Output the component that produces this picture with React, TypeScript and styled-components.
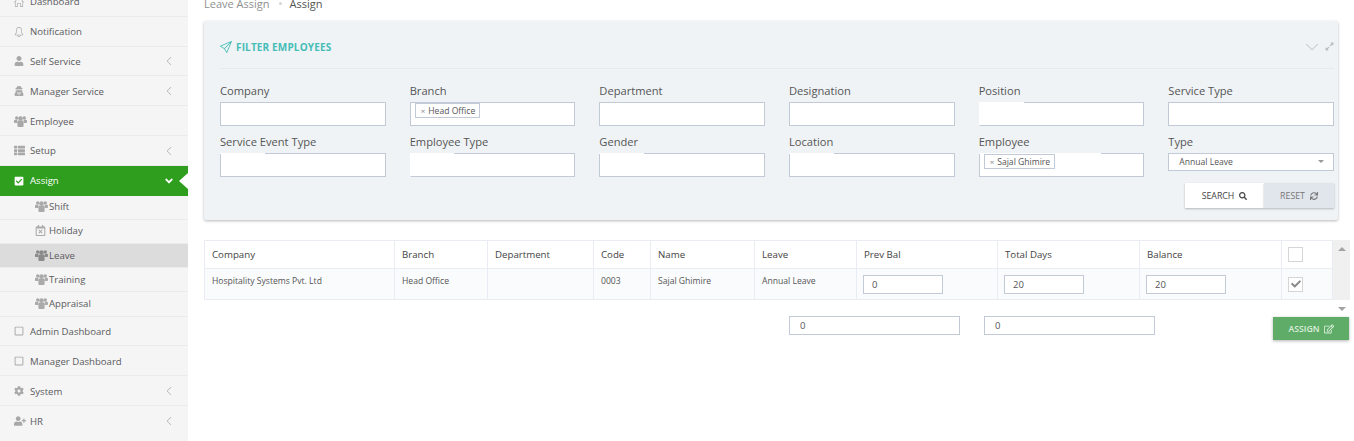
import React from 'react';
import styled, { createGlobalStyle } from 'styled-components';
import {
  FaAngleDown,
  FaCheck,
  FaCheckSquare,
  FaCog,
  FaExpandAlt,
  FaRegCalendarTimes,
  FaRegEdit,
  FaRegSquare,
  FaSearch,
  FaSync,
  FaThList,
  FaUser,
  FaUserPlus,
  FaUserSecret,
} from 'react-icons/fa';
import { SlArrowDown, SlArrowLeft, SlBell, SlHome, SlPaperPlane } from 'react-icons/sl';

const GlobalStyle = createGlobalStyle`
  html, body {
    margin: 0;
    padding: 0;
    height: 441px;
    overflow: hidden;
    background: #fff;
    font-family: "Open Sans", "Liberation Sans", sans-serif;
  }
  * { box-sizing: border-box; }
`;

const Page = styled.div`
  display: flex;
  width: 1354px;
  height: 441px;
  overflow: hidden;
`;

const Sidebar = styled.nav`
  width: 188px;
  height: 441px;
  flex: none;
  background: #f5f5f5;
  overflow: hidden;
`;

const MenuList = styled.ul`
  list-style: none;
  margin: -13px 0 0;
  padding: 0;
`;

const MenuRow = styled.li<{ $active?: boolean }>`
  position: relative;
  display: flex;
  align-items: center;
  height: 29.8px;
  padding: ${(p) => (p.$active ? '0' : '1px')} 13px 0 14px;
  font-size: 9.6px;
  color: ${(p) => (p.$active ? '#fff' : '#5b5b60')};
  background: ${(p) => (p.$active ? '#2f9e1f' : 'transparent')};
  border-bottom: ${(p) => (p.$active ? 'none' : '1px solid #ebebeb')};

  &:last-child {
    border-bottom: none;
  }
`;

const MenuIcon = styled.span<{ $active?: boolean }>`
  width: 16px;
  display: flex;
  align-items: center;
  color: ${(p) => (p.$active ? '#fff' : '#a8a8a8')};
  font-size: 10px;
`;

const MenuLabel = styled.span`
  flex: 1;
`;

const Caret = styled.span<{ $active?: boolean }>`
  display: flex;
  color: ${(p) => (p.$active ? '#fff' : '#a8a8a8')};
  font-size: ${(p) => (p.$active ? '12px' : '8px')};
  margin-right: ${(p) => (p.$active ? '0' : '2px')};
`;

const ActiveNotch = styled.span`
  position: absolute;
  right: 0;
  top: 7px;
  width: 0;
  height: 0;
  border-top: 8px solid transparent;
  border-bottom: 8px solid transparent;
  border-right: 9px solid #fff;
`;

const SubRow = styled.li<{ $selected?: boolean }>`
  display: flex;
  align-items: center;
  height: 24.2px;
  padding: 0 0 1px 35px;
  font-size: 9.6px;
  color: #5b5b60;
  background: ${(p) => (p.$selected ? '#dcdcdc' : 'transparent')};
  border-bottom: 1px solid #ebebeb;
`;

const SubIcon = styled.span<{ $selected?: boolean }>`
  display: flex;
  width: 14px;
  color: ${(p) => (p.$selected ? '#8a8a8a' : '#aaa')};
`;

const Main = styled.main`
  flex: 1;
  min-width: 0;
  padding: 0 5px 0 16px;
`;

const Breadcrumb = styled.div`
  display: flex;
  align-items: center;
  height: 21px;
  margin-top: -7px;
  font-size: 11px;
  color: #8f8f8f;
`;

const CrumbDot = styled.span`
  width: 3px;
  height: 3px;
  margin: 0 8px 0 9px;
  border-radius: 50%;
  background: #d5d5d5;
`;

const CrumbCurrent = styled.span`
  color: #555;
`;

const FilterPanel = styled.section`
  width: 1134px;
  height: 199px;
  margin-top: 7px;
  padding: 0 4px 0 16px;
  background: #eff3f6;
  border-radius: 2px;
  box-shadow: 0 1px 3px rgba(0, 0, 0, 0.28);
`;

const PanelHead = styled.header`
  display: flex;
  align-items: center;
  justify-content: space-between;
  height: 48px;
  padding-top: 4px;
  border-bottom: 1px solid #e8e9ea;
`;

const PanelTitle = styled.h2`
  display: flex;
  align-items: center;
  gap: 4px;
  margin: 0;
  font-size: 10px;
  font-weight: 700;
  letter-spacing: 0.15px;
  color: #45bdb6;
`;

const PanelTools = styled.div`
  display: flex;
  align-items: center;
  gap: 7px;
  color: #b9bdc2;
`;

const FilterGrid = styled.div`
  display: grid;
  grid-template-columns: repeat(6, 165.67px);
  column-gap: 24px;
  row-gap: 8px;
  margin-top: 15px;
`;

const Field = styled.div`
  display: flex;
  flex-direction: column;
  height: 43px;
`;

const FieldLabel = styled.label`
  height: 18px;
  font-size: 11.15px;
  line-height: 14px;
  color: #555;
`;

const TextBox = styled.div<{ $short?: boolean; $noLeft?: boolean }>`
  position: relative;
  display: flex;
  align-items: flex-start;
  height: ${(p) => (p.$short ? '18px' : '24px')};
  padding: ${(p) => (p.$short ? '0' : '0 0 0 4px')};
  background: #fff;
  border: 1px solid #c2cad8;
  ${(p) => p.$noLeft && 'border-left-color: #fff;'}
`;

const Scuff = styled.span<{ $width: number }>`
  position: absolute;
  left: -1px;
  top: -1px;
  width: ${(p) => p.$width}px;
  height: 1px;
  background: #fff;
`;

const Tag = styled.span`
  display: inline-flex;
  align-items: center;
  gap: 3px;
  height: 15px;
  padding: 0 4px 0 5px;
  font-size: 8.6px;
  color: #555;
  background: #fff;
  border: 1px solid #c2cad8;
`;

const TagClose = styled.span`
  color: #888;
  font-size: 8px;
`;

const SelectValue = styled.div`
  display: flex;
  align-items: center;
  justify-content: space-between;
  width: 100%;
  height: 15px;
  padding: 0 9px 0 10px;
  font-size: 8.6px;
  color: #555;
`;

const SelectArrow = styled.span`
  width: 0;
  height: 0;
  border-left: 3.5px solid transparent;
  border-right: 3.5px solid transparent;
  border-top: 3px solid #999;
`;

const ButtonRow = styled.div`
  display: flex;
  justify-content: flex-end;
  margin-top: 5px;
`;

const ActionButton = styled.button<{ $primary?: boolean }>`
  display: flex;
  align-items: center;
  justify-content: center;
  gap: 5px;
  height: 25px;
  width: ${(p) => (p.$primary ? '79px' : '70px')};
  padding: 0;
  border: none;
  font-family: inherit;
  font-size: 8.8px;
  font-weight: ${(p) => (p.$primary ? 500 : 400)};
  color: ${(p) => (p.$primary ? '#444' : '#777')};
  background: ${(p) => (p.$primary ? '#fff' : '#e1e5ec')};
  box-shadow: 0 1px 2px rgba(0, 0, 0, 0.25);
`;

const TableWrap = styled.div`
  display: flex;
  width: 1145px;
  margin-top: 20px;
`;

const GridTable = styled.table`
  width: 1128px;
  height: 60px;
  flex: none;
  table-layout: fixed;
  border-collapse: collapse;
  font-size: 8.6px;
  color: #555;
`;

const ColumnSize = styled.col<{ $width: number }>`
  width: ${(p) => p.$width}px;
`;

const HeadCell = styled.th`
  height: 28px;
  padding: 0 7px;
  font-size: 9.7px;
  font-weight: 500;
  text-align: left;
  color: #444;
  background: #fff;
  border: 1px solid #e9edf3;
`;

const BodyCell = styled.td`
  height: 31px;
  padding: 0 7px 7px;
  background: #fafbfd;
  border: 1px solid #e9edf3;
`;

const InputCell = styled(BodyCell)`
  padding: 0 6px;
`;

const NumberBox = styled.div`
  display: flex;
  align-items: center;
  width: 80px;
  height: 19px;
  padding-left: 8px;
  font-size: 9.5px;
  color: #555;
  background: #fff;
  border: 1px solid #c2cad8;
`;

const CheckCell = styled.td`
  padding: 0 0 0 6px;
  background: #fafbfd;
  border: 1px solid #e9edf3;
  text-align: left;
`;

const HeadCheckCell = styled.th`
  padding: 0 0 0 6px;
  background: #fff;
  border: 1px solid #e9edf3;
  text-align: left;
`;

const CheckBox = styled.span`
  display: inline-flex;
  align-items: center;
  justify-content: center;
  width: 15px;
  height: 15px;
  vertical-align: middle;
  font-size: 10px;
  color: #888;
  background: #fff;
  border: 1px solid #d5d5d5;
`;

const ScrollBar = styled.div`
  width: 17px;
  height: 76px;
  flex: none;
  display: flex;
  flex-direction: column;
  align-items: center;
  justify-content: space-between;
  padding: 7px 0 5px;
  background: linear-gradient(#f0f0f0 60px, #fff 60px);
`;

const ScrollArrow = styled.span<{ $down?: boolean }>`
  width: 0;
  height: 0;
  border-left: 4px solid transparent;
  border-right: 4px solid transparent;
  ${(p) => (p.$down ? 'border-top: 4px solid #a3a3a3;' : 'border-bottom: 4px solid #a3a3a3;')}
`;

const Totals = styled.div`
  display: flex;
  align-items: flex-start;
  gap: 24px;
  width: 1145px;
  padding-left: 585px;
`;

const TotalBox = styled.div`
  display: flex;
  align-items: center;
  width: 171px;
  height: 19px;
  padding-left: 10px;
  font-size: 9.5px;
  color: #555;
  background: #fff;
  border: 1px solid #c2cad8;
`;

const AssignButton = styled.button`
  display: flex;
  align-items: center;
  justify-content: center;
  gap: 4px;
  width: 76px;
  height: 23px;
  margin: 1px 0 0 auto;
  padding: 0;
  border: none;
  font-family: inherit;
  font-size: 8.7px;
  font-weight: 600;
  color: #dcefde;
  background: #5fac68;
  box-shadow: 0 1px 3px rgba(0, 0, 0, 0.3);
`;

// the old three-person group glyph, chunkier than the one in the icon packs
const GroupIcon = () => (
  <svg width="13" height="11" viewBox="0 0 13 11" fill="currentColor" aria-hidden="true">
    <circle cx="2.7" cy="2" r="1.7" />
    <circle cx="10.3" cy="2" r="1.7" />
    <path d="M0 4.4C0 4 .4 3.8 1 3.8h2.3L3.4 7H1C.4 7 0 6.6 0 6ZM13 4.4c0-.4-.4-.6-1-.6H9.7L9.6 7H12c.6 0 1-.4 1-1Z" />
    <circle cx="6.5" cy="2.6" r="2.3" />
    <path d="M3.4 6.2C3.4 5.2 4 4.6 5 4.6h3c1 0 1.6.6 1.6 1.6v3.2c0 1-.6 1.6-1.6 1.6H5c-1 0-1.6-.6-1.6-1.6Z" />
  </svg>
);

const menuTop = [
  { label: 'Dashboard', icon: <SlHome /> },
  { label: 'Notification', icon: <SlBell /> },
  { label: 'Self Service', icon: <FaUser />, caret: true },
  { label: 'Manager Service', icon: <FaUserSecret />, caret: true },
  { label: 'Employee', icon: <GroupIcon /> },
  { label: 'Setup', icon: <FaThList size={11} />, caret: true },
];

const menuBottom = [
  { label: 'Admin Dashboard', icon: <FaRegSquare /> },
  { label: 'Manager Dashboard', icon: <FaRegSquare /> },
  { label: 'System', icon: <FaCog />, caret: true },
  { label: 'HR', icon: <FaUserPlus size={12} />, caret: true },
];

const subMenu = [
  { label: 'Shift', icon: <GroupIcon /> },
  { label: 'Holiday', icon: <FaRegCalendarTimes size={11} /> },
  { label: 'Leave', icon: <GroupIcon />, selected: true },
  { label: 'Training', icon: <GroupIcon /> },
  { label: 'Appraisal', icon: <GroupIcon /> },
];

const filterRowOne = [
  { label: 'Company', scuff: 0 },
  { label: 'Branch', scuff: 0, tag: 'Head Office' },
  { label: 'Department', scuff: 0 },
  { label: 'Designation', scuff: 0 },
  { label: 'Position', scuff: 45, noLeft: true },
  { label: 'Service Type', scuff: 0 },
];

const filterRowTwo = [
  { label: 'Service Event Type', scuff: 45 },
  { label: 'Employee Type', scuff: 44, noLeft: true },
  { label: 'Gender', scuff: 45 },
  { label: 'Location', scuff: 45 },
  { label: 'Employee', scuff: 122, tag: 'Sajal Ghimire' },
];

const columns = [190, 93, 106, 57, 104, 102, 141, 142, 142, 51];

const renderField = (f: { label: string; scuff: number; tag?: string; noLeft?: boolean }) => (
  <Field key={f.label}>
    <FieldLabel>{f.label}</FieldLabel>
    <TextBox $noLeft={f.noLeft}>
      {f.tag && (
        <Tag>
          <TagClose>×</TagClose>
          {f.tag}
        </Tag>
      )}
      {f.scuff > 0 && <Scuff $width={f.scuff} />}
    </TextBox>
  </Field>
);

const App = () => (
  <Page>
    <GlobalStyle />
    <Sidebar>
      <MenuList>
        {menuTop.map((m) => (
          <MenuRow key={m.label}>
            <MenuIcon>{m.icon}</MenuIcon>
            <MenuLabel>{m.label}</MenuLabel>
            {m.caret && <Caret><SlArrowLeft /></Caret>}
          </MenuRow>
        ))}
        <MenuRow $active>
          <MenuIcon $active><FaCheckSquare /></MenuIcon>
          <MenuLabel>Assign</MenuLabel>
          <Caret $active><FaAngleDown /></Caret>
          <ActiveNotch />
        </MenuRow>
        {subMenu.map((s) => (
          <SubRow key={s.label} $selected={s.selected}>
            <SubIcon $selected={s.selected}>{s.icon}</SubIcon>
            {s.label}
          </SubRow>
        ))}
        {menuBottom.map((m) => (
          <MenuRow key={m.label}>
            <MenuIcon>{m.icon}</MenuIcon>
            <MenuLabel>{m.label}</MenuLabel>
            {m.caret && <Caret><SlArrowLeft /></Caret>}
          </MenuRow>
        ))}
      </MenuList>
    </Sidebar>
    <Main>
      <Breadcrumb>
        Leave Assign
        <CrumbDot />
        <CrumbCurrent>Assign</CrumbCurrent>
      </Breadcrumb>
      <FilterPanel>
        <PanelHead>
          <PanelTitle>
            <SlPaperPlane size={12} />
            FILTER EMPLOYEES
          </PanelTitle>
          <PanelTools>
            <SlArrowDown size={12} />
            <FaExpandAlt size={9} />
          </PanelTools>
        </PanelHead>
        <FilterGrid>
          {filterRowOne.map(renderField)}
          {filterRowTwo.map(renderField)}
          <Field>
            <FieldLabel>Type</FieldLabel>
            <TextBox $short>
              <SelectValue>
                Annual Leave
                <SelectArrow />
              </SelectValue>
            </TextBox>
          </Field>
        </FilterGrid>
        <ButtonRow>
          <ActionButton $primary>SEARCH <FaSearch size={8} /></ActionButton>
          <ActionButton>RESET <FaSync size={8} /></ActionButton>
        </ButtonRow>
      </FilterPanel>
      <TableWrap>
        <GridTable>
          <colgroup>
            {columns.map((w, i) => <ColumnSize key={i} $width={w} />)}
          </colgroup>
          <thead>
            <tr>
              {['Company', 'Branch', 'Department', 'Code', 'Name', 'Leave', 'Prev Bal', 'Total Days', 'Balance'].map((h) => (
                <HeadCell key={h}>{h}</HeadCell>
              ))}
              <HeadCheckCell><CheckBox /></HeadCheckCell>
            </tr>
          </thead>
          <tbody>
            <tr>
              {['Hospitality Systems Pvt. Ltd', 'Head Office', '', '0003', 'Sajal Ghimire', 'Annual Leave'].map((c, i) => (
                <BodyCell key={i}>{c}</BodyCell>
              ))}
              {['0', '20', '20'].map((v, i) => (
                <InputCell key={i}><NumberBox>{v}</NumberBox></InputCell>
              ))}
              <CheckCell><CheckBox><FaCheck /></CheckBox></CheckCell>
            </tr>
          </tbody>
        </GridTable>
        <ScrollBar>
          <ScrollArrow />
          <ScrollArrow $down />
        </ScrollBar>
      </TableWrap>
      <Totals>
        <TotalBox>0</TotalBox>
        <TotalBox>0</TotalBox>
        <AssignButton>ASSIGN <FaRegEdit size={10} /></AssignButton>
      </Totals>
    </Main>
  </Page>
);

export default App;
